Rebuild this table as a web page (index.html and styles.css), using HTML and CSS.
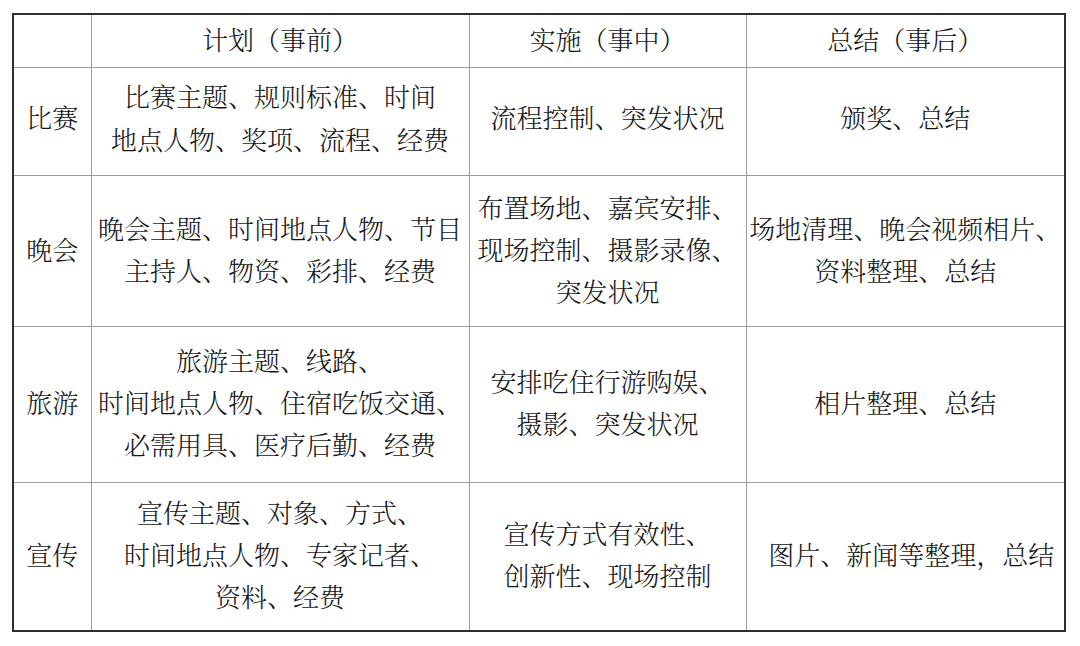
FILE: index.html
```html
<!DOCTYPE html>
<html lang="zh-CN">
<head>
<meta charset="utf-8">
<title>活动策划表</title>
<link rel="stylesheet" href="styles.css">
</head>
<body>
<table class="plan">
  <colgroup>
    <col class="c-label">
    <col class="c-before">
    <col class="c-during">
    <col class="c-after">
  </colgroup>
  <thead>
    <tr class="r-head">
      <th></th>
      <th>计划（事前）</th>
      <th>实施（事中）</th>
      <th>总结（事后）</th>
    </tr>
  </thead>
  <tbody>
    <tr class="r-1">
      <th>比赛</th>
      <td>比赛主题、规则标准、时间<br>地点人物、奖项、流程、经费</td>
      <td>流程控制、突发状况</td>
      <td>颁奖、总结</td>
    </tr>
    <tr class="r-2">
      <th>晚会</th>
      <td>晚会主题、时间地点人物、节目<br>主持人、物资、彩排、经费</td>
      <td>布置场地、嘉宾安排、<br>现场控制、摄影录像、<br>突发状况</td>
      <td>场地清理、晚会视频相片、<br>资料整理、总结</td>
    </tr>
    <tr class="r-3">
      <th>旅游</th>
      <td>旅游主题、线路、<br>时间地点人物、住宿吃饭交通、<br>必需用具、医疗后勤、经费</td>
      <td>安排吃住行游购娱、<br>摄影、突发状况</td>
      <td>相片整理、总结</td>
    </tr>
    <tr class="r-4">
      <th>宣传</th>
      <td>宣传主题、对象、方式、<br>时间地点人物、专家记者、<br>资料、经费</td>
      <td>宣传方式有效性、<br>创新性、现场控制</td>
      <td class="shift">图片、新闻等整理，总结</td>
    </tr>
  </tbody>
</table>
</body>
</html>
```

FILE: styles.css
```css
html, body {
  margin: 0;
  padding: 0;
  background: #ffffff;
}

body {
  padding: 13px 0 0 12px;
  font-family: "Noto Serif CJK SC", "Noto Sans CJK SC", sans-serif;
  color: #151515;
}

.plan {
  border-collapse: collapse;
  table-layout: fixed;
  width: 1052px;
  border: 2px solid #2e2e2e;
}

.c-label { width: 78px; }
.c-before { width: 378px; }
.c-during { width: 277px; }
.c-after { width: 319px; }

.plan th,
.plan td {
  border: 1px solid #9c9c9c;
  padding: 0 0 4px 0;
  text-align: center;
  vertical-align: middle;
  font-size: 26px;
  font-weight: 300;
  line-height: 42px;
  white-space: nowrap;
  overflow: hidden;
}

.r-head { height: 53px; }
.r-1 { height: 108px; }
.r-2 { height: 151px; }
.r-3 { height: 156px; }
.r-4 { height: 149px; }

.r-1 td,
.r-1 th {
  line-height: 43px;
  padding-bottom: 9px;
}

.plan td.shift { padding-left: 12px; }
```
